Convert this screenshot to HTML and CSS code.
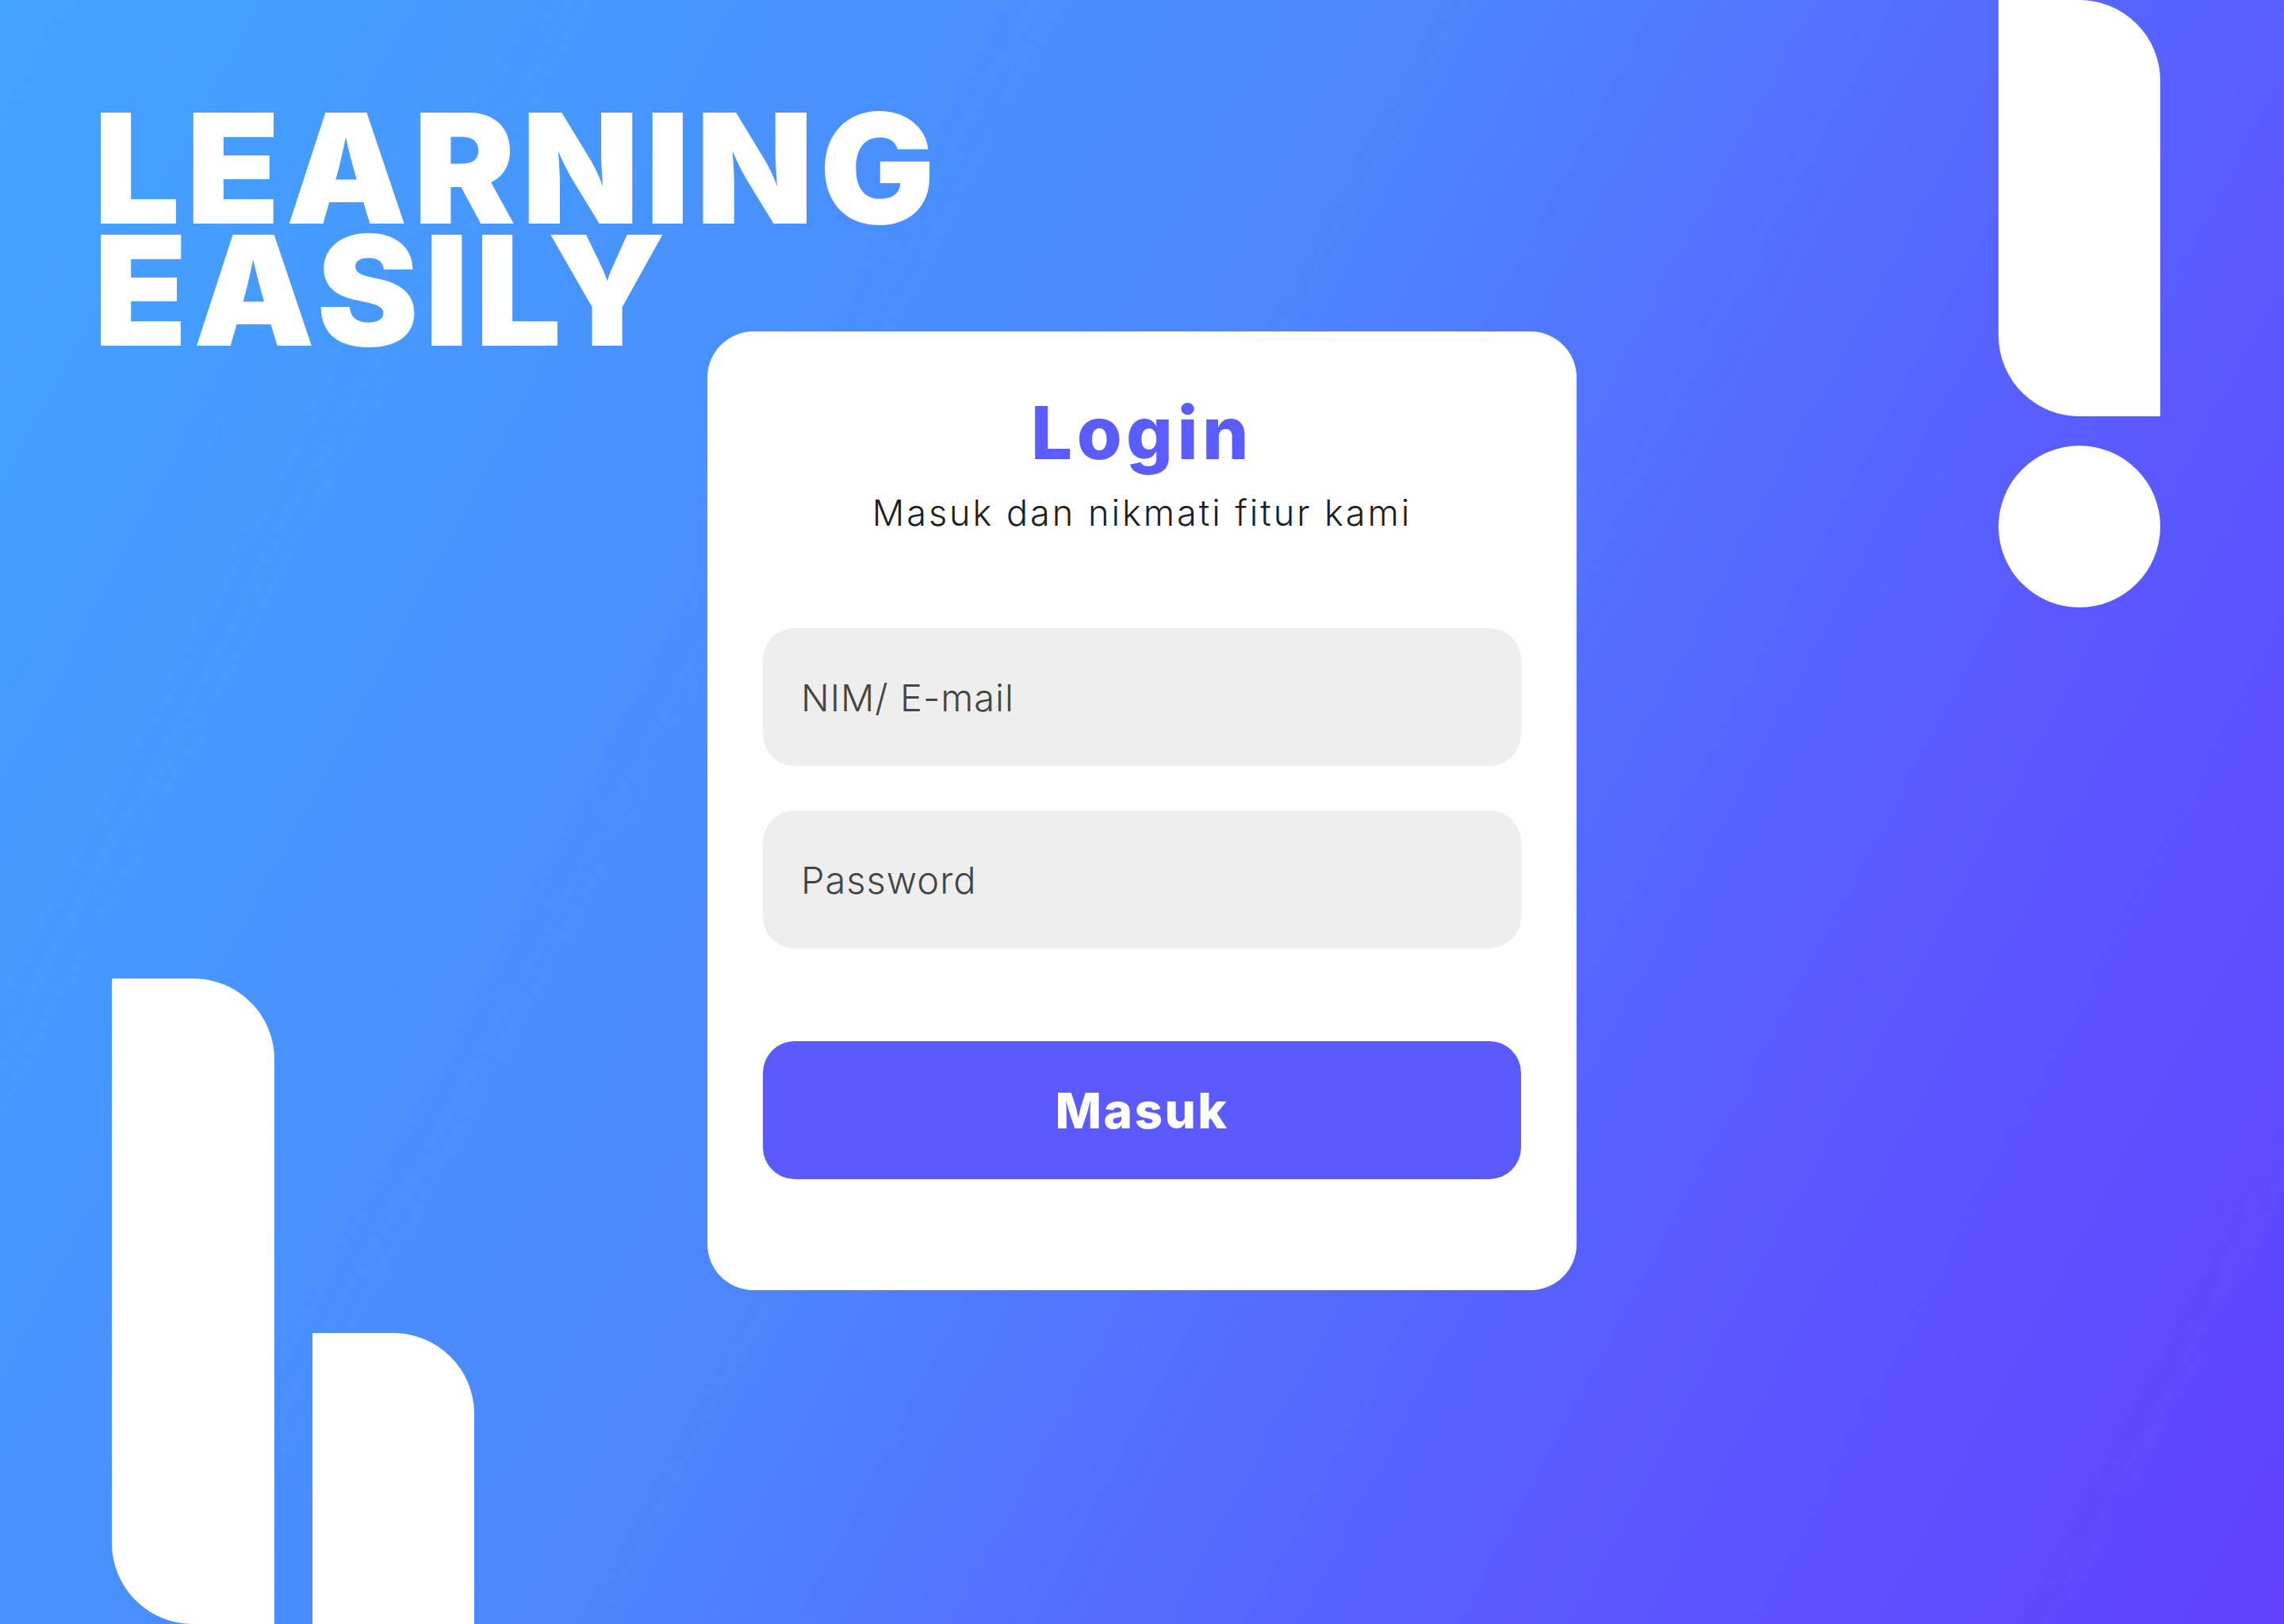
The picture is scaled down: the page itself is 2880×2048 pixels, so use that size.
FILE: index.html
```html
<!DOCTYPE html>
<html lang="id">
<head>
<meta charset="utf-8">
<title>Learning Easily - Login</title>
<link rel="stylesheet" href="styles.css">
</head>
<body>
<div class="page">
  <div class="decor" aria-hidden="true">
    <div class="shape bar-top"></div>
    <div class="shape dot"></div>
    <div class="shape bar-tall"></div>
    <div class="shape bar-short"></div>
  </div>
  <main class="stage">
    <h1 class="brand"><span class="brand-line">LEARNING</span><span class="brand-line">EASILY</span></h1>
    <form class="card">
      <h2 class="card-title">Login</h2>
      <p class="card-sub">Masuk dan nikmati fitur kami</p>
      <div class="fields">
        <input class="field" type="text" placeholder="NIM/ E-mail">
        <input class="field" type="password" placeholder="Password">
      </div>
      <button class="submit" type="button">Masuk</button>
    </form>
  </main>
</div>
</body>
</html>
```

FILE: styles.css
```css
html, body {
  margin: 0;
  padding: 0;
}

body {
  font-family: Inter, "Noto Sans", sans-serif;
}

.page {
  position: relative;
  width: 2880px;
  height: 2048px;
  overflow: hidden;
  background: linear-gradient(118deg, #43a4ff 0%, #4c86ff 45%, #5a5aff 75%, #6140ff 100%);
}

.decor {
  position: absolute;
  inset: 0;
}

.shape {
  position: absolute;
  background: #ffffff;
}

.bar-top {
  left: 2520px;
  top: 0;
  width: 204px;
  height: 525px;
  border-radius: 0 102px 0 102px;
}

.dot {
  left: 2520px;
  top: 562px;
  width: 204px;
  height: 204px;
  border-radius: 50%;
}

.bar-tall {
  left: 141px;
  top: 1234px;
  width: 205px;
  height: 814px;
  border-radius: 0 102px 0 102px;
}

.bar-short {
  left: 394px;
  top: 1681px;
  width: 204px;
  height: 420px;
  border-radius: 0 102px 0 0;
}

.stage {
  position: relative;
  display: grid;
  grid-template-areas: "all";
  height: 100%;
}

.brand {
  grid-area: all;
  justify-self: start;
  align-self: start;
  margin: 0;
  padding: 135px 0 0 118px;
  display: flex;
  flex-direction: column;
  gap: 0;
  font-family: Inter, sans-serif;
  font-weight: 900;
  font-size: 193px;
  letter-spacing: 7.5px;
  color: #ffffff;
}

.brand-line {
  display: block;
  height: 154px;
  line-height: 154px;
  overflow: visible;
}

.card {
  grid-area: all;
  justify-self: center;
  align-self: start;
  margin-top: 418px;
  width: 1096px;
  box-sizing: border-box;
  padding: 82px 70px 140px;
  background: #ffffff;
  border-radius: 58px;
  display: flex;
  flex-direction: column;
  align-items: stretch;
}

.card-title {
  margin: 0;
  text-align: center;
  font-weight: 800;
  font-size: 92px;
  line-height: 92px;
  letter-spacing: 5.5px;
  color: #5a5cff;
}

.card-sub {
  margin: 32px 0 0;
  text-align: center;
  font-weight: 300;
  font-size: 45px;
  line-height: 45px;
  letter-spacing: 3px;
  color: #1e1e1e;
}

.fields {
  margin-top: 123px;
  display: flex;
  flex-direction: column;
  gap: 56px;
}

.field {
  display: block;
  width: 100%;
  box-sizing: border-box;
  height: 174px;
  border: none;
  border-radius: 40px;
  background: #eeeeee;
  padding: 0 48px;
  font-family: Inter, sans-serif;
  font-weight: 300;
  font-size: 47px;
  letter-spacing: 1px;
  color: #444444;
  outline: none;
}

.field::placeholder {
  color: #454545;
  opacity: 1;
}

.submit {
  margin-top: 117px;
  height: 174px;
  border: none;
  border-radius: 40px;
  background: #5a5aff;
  color: #ffffff;
  font-family: Inter, sans-serif;
  font-weight: 800;
  font-size: 62px;
  letter-spacing: 2.5px;
  cursor: pointer;
}
```
